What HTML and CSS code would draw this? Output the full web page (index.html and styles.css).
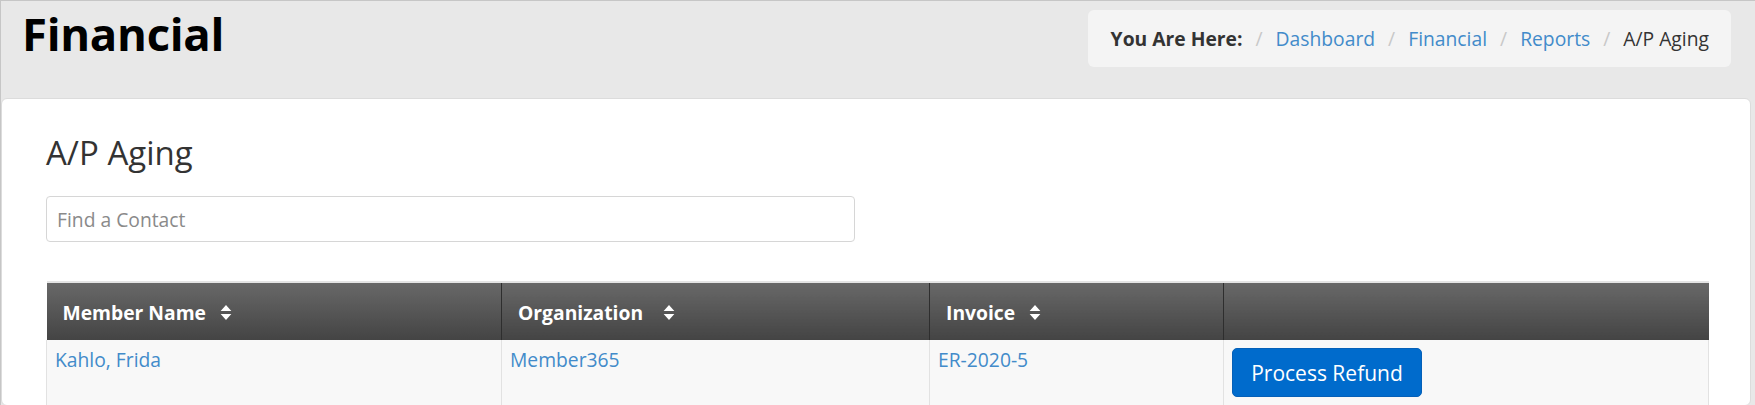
FILE: index.html
```html
<!DOCTYPE html>
<html>
<head>
<meta charset="utf-8">
<link rel="stylesheet" href="styles.css">
</head>
<body>
<div class="page">
  <header class="topbar">
    <h1 class="title">Financial</h1>
    <nav class="crumbs">
      <span class="crumbs-label">You Are Here:</span>
      <span class="sep">/</span>
      <a class="crumb" href="#">Dashboard</a>
      <span class="sep">/</span>
      <a class="crumb" href="#">Financial</a>
      <span class="sep">/</span>
      <a class="crumb" href="#">Reports</a>
      <span class="sep">/</span>
      <span class="crumb-current">A/P Aging</span>
    </nav>
  </header>
  <main class="panel">
    <h2 class="panel-title">A/P Aging</h2>
    <input class="search" type="text" placeholder="Find a Contact">
    <table class="grid">
      <colgroup>
        <col class="c1"><col class="c2"><col class="c3"><col class="c4">
      </colgroup>
      <thead>
        <tr>
          <th><span class="th-label">Member Name</span><svg class="sort" viewBox="0 0 10 14"><path d="M5 0 L10 5.5 H0 Z M0 8.5 H10 L5 14 Z"/></svg></th>
          <th><span class="th-label">Organization</span><svg class="sort wide" viewBox="0 0 10 14"><path d="M5 0 L10 5.5 H0 Z M0 8.5 H10 L5 14 Z"/></svg></th>
          <th><span class="th-label">Invoice</span><svg class="sort" viewBox="0 0 10 14"><path d="M5 0 L10 5.5 H0 Z M0 8.5 H10 L5 14 Z"/></svg></th>
          <th></th>
        </tr>
      </thead>
      <tbody>
        <tr>
          <td><a class="cell-link" href="#">Kahlo, Frida</a></td>
          <td><a class="cell-link" href="#">Member365</a></td>
          <td><a class="cell-link" href="#">ER-2020-5</a></td>
          <td><button class="btn-refund" type="button">Process Refund</button></td>
        </tr>
      </tbody>
    </table>
  </main>
</div>
</body>
</html>
```

FILE: styles.css
```css
* { box-sizing: border-box; }
html, body { margin: 0; padding: 0; }
body {
  background: #e8e8e8;
  font-family: "Open Sans", "Liberation Sans", sans-serif;
  color: #333;
  overflow: hidden;
}
.page {
  height: 405px;
  border-top: 1px solid #c6c6c6;
  border-left: 1px solid #c6c6c6;
}
.topbar {
  display: flex;
  justify-content: space-between;
  align-items: flex-start;
  height: 97px;
  padding-left: 21px;
  padding-right: 24px;
}
.title {
  margin: 0;
  padding-top: 2px;
  font-size: 45.5px;
  line-height: 60px;
  font-weight: 700;
  color: #000;
  letter-spacing: -0.3px;
}
.crumbs {
  margin-top: 9px;
  height: 57px;
  display: flex;
  align-items: center;
  padding: 0 22px 0 23px;
  background: #f4f4f4;
  border-radius: 6px;
  font-size: 19.3px;
}
.crumbs-label { font-weight: 700; color: #333; }
.sep { color: #c8c8c8; padding: 0 13px; }
.crumb { color: #428bca; text-decoration: none; }
.crumb-current { color: #333; }
.panel {
  background: #fff;
  border: 1px solid #dcdcdc;
  border-radius: 6px;
  margin-right: 4px;
  height: 308px;
  padding: 32px 41px 0 44px;
}
.panel-title {
  margin: 0;
  font-size: 33px;
  font-weight: 400;
  line-height: 44px;
  color: #333;
}
.search {
  display: block;
  margin-top: 21px;
  width: 809px;
  height: 46px;
  padding: 0 10px;
  border: 1px solid #d6d6d6;
  border-radius: 4px;
  font-family: inherit;
  font-size: 19.3px;
  color: #555;
  outline: none;
}
.search::placeholder { color: #8a8a8a; }
.grid {
  margin-top: 39px;
  width: 100%;
  border-collapse: collapse;
  table-layout: fixed;
  border-top: 2px solid #e4e4e4;
}
.c1 { width: 455px; }
.c2 { width: 428px; }
.c3 { width: 294px; }
.c4 { width: auto; }
.grid th {
  height: 58px;
  padding: 0 16px;
  text-align: left;
  color: #fff;
  font-size: 19.3px;
  font-weight: 700;
  background: linear-gradient(#686868, #444);
  border-left: 1px solid #2e2e2e;
  white-space: nowrap;
}
.grid th:first-child { border-left: none; }
.th-label { vertical-align: middle; }
.sort {
  width: 12px;
  height: 15px;
  margin-left: 14px;
  fill: #fff;
  vertical-align: middle;
}
.sort.wide { margin-left: 20px; }
.grid td {
  background: #f8f8f8;
  border-left: 1px solid #e2e2e2;
  border-right: 1px solid #e2e2e2;
  vertical-align: top;
  padding: 6px 8px 0 8px;
  height: 70px;
  font-size: 19.3px;
}
.cell-link { color: #428bca; text-decoration: none; line-height: 28px; }
.btn-refund {
  display: inline-block;
  width: 190px;
  height: 49px;
  margin-top: 2px;
  border: 1px solid #0560b8;
  border-radius: 5px;
  background: #006bcc;
  color: #fff;
  font-family: inherit;
  font-size: 21px;
}
```
